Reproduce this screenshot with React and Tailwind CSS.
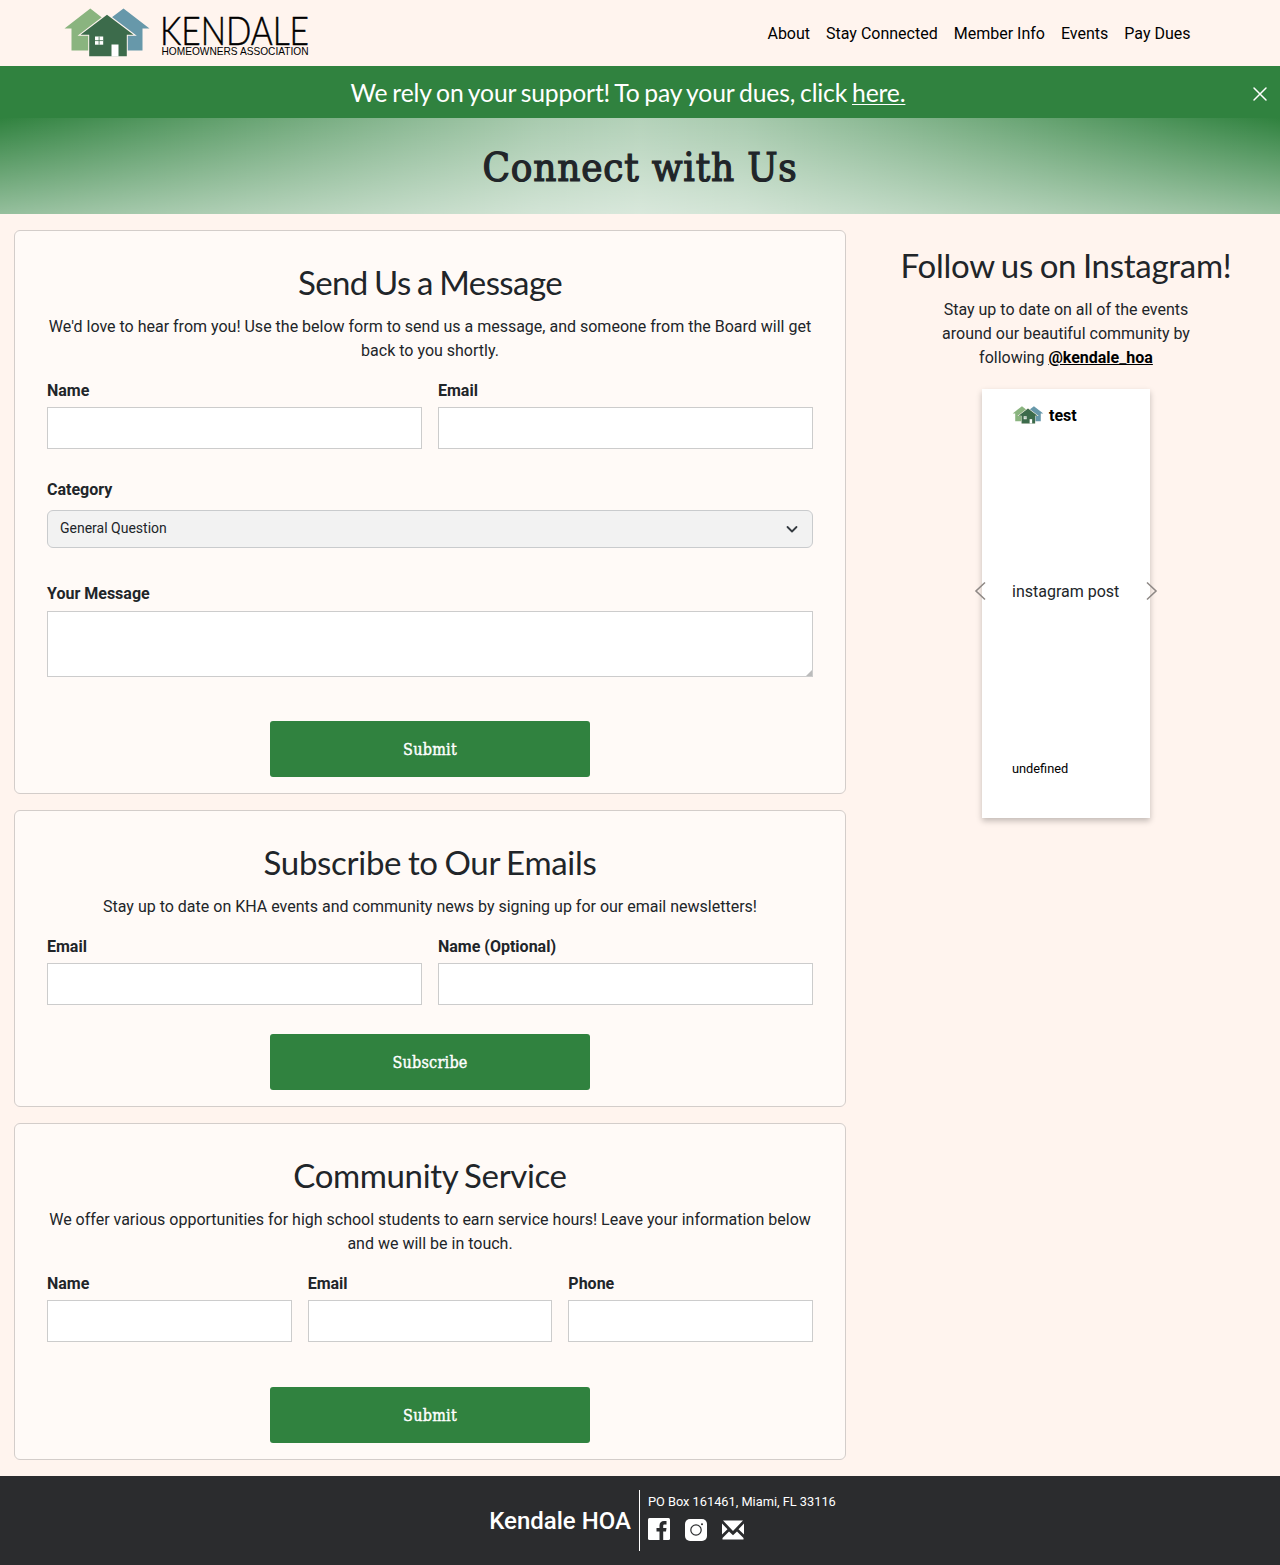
function Houses({ className }) {
  return (
    <svg viewBox="0 0 86 50" className={className} aria-hidden="true">
      <path d="M26.300 0.500L52 20.500H45V42.500H7.500V20.500H0.500Z" fill="#8ab47f" />
      <path d="M59.500 0.500L85.500 20.500H78.500V42.500H40V20.500H33Z" fill="#6798aa" />
      <path d="M43 5.200L72.800 27.800H63.800V49.500H24.200V27.800H13.500Z" fill="#fff5f0" />
      <path d="M43 6.700L69.500 26.800H62.800V48.300H25.200V26.800H16.500Z" fill="#3c6b4b" />
      <rect x="31" y="28.500" width="8.200" height="8.200" fill="#fff" />
      <path d="M35.100 28.500V36.700M31 32.600H39.200" stroke="#3c6b4b" strokeWidth="0.800" />
      <rect x="47.500" y="36.500" width="7" height="12" fill="#fff" />
    </svg>
  );
}

function Logo() {
  return (
    <a href="#" className="ml-16 flex h-[66px] items-start" aria-label="Kendale Homeowners Association">
      <Houses className="mt-[7.500px] h-[50px] w-[86px]" />
      <svg viewBox="0 0 156 60" className="mt-[5px] ml-[11px] h-[60px] w-[156px] overflow-visible">
        <text x="-1" y="39.500" textLength="149" lengthAdjust="spacingAndGlyphs" fontSize="39" fontWeight="300" stroke="#000" strokeWidth="0.500" fontFamily="Lato, sans-serif">KENDALE</text>
        <text x="0.500" y="49.500" textLength="147" lengthAdjust="spacingAndGlyphs" fontSize="10.500" fontFamily="Liberation Sans, sans-serif">HOMEOWNERS ASSOCIATION</text>
      </svg>
    </a>
  );
}

function Field({ label }) {
  return (
    <label className="flex min-w-0 flex-1 flex-col gap-1">
      <span className="font-bold">{label}</span>
      <input className="h-[42px] w-full border border-[#ccc] bg-white px-3" />
    </label>
  );
}

function Card({ title, titleClass, text, className, children }) {
  return (
    <section className={`rounded-md border border-[#d3cdca] bg-[#fffaf7] px-8 pt-8 ${className}`}>
      <h2 className={`mb-3.5 text-center font-["Lato",sans-serif] text-[33px] leading-[38.400px] [word-spacing:-1.500px] ${titleClass}`}>{title}</h2>
      <p className="mb-4 text-center">{text}</p>
      {children}
    </section>
  );
}

function Button({ children, className }) {
  return (
    <button className={`mx-auto block h-14 w-80 rounded-[3px] bg-[#30823f] pt-0.5 font-["DejaVu_Serif_Condensed","DejaVu_Serif",serif] text-[16px] tracking-[0.250px] text-white [-webkit-text-stroke:0.400px_white] ${className}`}>
      {children}
    </button>
  );
}

function Chevron({ flip }) {
  return (
    <svg viewBox="0 0 12 20" className={`h-5 w-3 ${flip ? "-scale-x-100" : ""}`} fill="none" stroke="#8f8986" strokeWidth="1.600">
      <path d="M11 1.500L2 10L11 18.500" />
    </svg>
  );
}

export default function App() {
  return (
    <div className={'flex min-h-[1565px] flex-col bg-[#fff4ee] font-["Roboto",sans-serif] text-base text-[#212529]'}>
      <header className="flex h-[66px] items-start justify-between">
        <Logo />
        <nav className="mr-[89.500px] flex h-[66px] items-center gap-4 pt-0.5 text-black">
          <a href="#">About</a>
          <a href="#">Stay Connected</a>
          <a href="#">Member Info</a>
          <a href="#">Events</a>
          <a href="#">Pay Dues</a>
        </nav>
      </header>

      <div className={'flex h-[52px] items-center bg-[#30823f] font-["Lato",sans-serif] text-[24.700px] text-white'}>
        <p className="flex-1 pt-px pl-1 text-center tracking-[-0.150px] [word-spacing:-1.300px]">
          We rely on your support! To pay your dues, click{" "}
          <a href="#" className="underline decoration-1 underline-offset-2">here.</a>
        </p>
        <button className="mt-1 mr-3 size-4" aria-label="Close">
          <svg viewBox="0 0 16 16" stroke="#fff" strokeWidth="1.500" strokeLinecap="round">
            <path d="M2 2L14 14M14 2L2 14" />
          </svg>
        </button>
      </div>

      <div className="flex h-24 items-center justify-center bg-[#30823f] bg-[image:linear-gradient(to_bottom,rgba(255,255,255,0),rgba(255,255,255,0.49)),linear-gradient(to_right,rgba(255,255,255,0),rgba(255,255,255,0.35)_25%,rgba(255,255,255,0.58)_42%,rgba(255,255,255,0.64)_50%,rgba(255,255,255,0.58)_58%,rgba(255,255,255,0.35)_75%,rgba(255,255,255,0))]">
        <h1 className={'pt-0.5 font-["DejaVu_Serif_Condensed","DejaVu_Serif",serif] text-[40px] leading-[48px] tracking-[0.800px] [-webkit-text-stroke:1.200px_#212529]'}>Connect with Us</h1>
      </div>

      <main className="flex flex-1 items-start pt-4 pl-3.5">
        <div className="flex w-[832px] flex-col gap-4">
          <Card
            title="Send Us a Message"
            titleClass="tracking-[-0.580px]"
            className="h-[564px]"
            text="We'd love to hear from you! Use the below form to send us a message, and someone from the Board will get back to you shortly."
          >
            <div className="flex gap-4">
              <Field label="Name" />
              <Field label="Email" />
            </div>
            <div className="mt-[29px] flex flex-col gap-2">
              <span className="font-bold">Category</span>
              <div className="flex h-[38px] items-center justify-between rounded-md border border-[#c9cbcd] bg-[#f2f2f2] px-3 pb-0.5 text-sm">
                General Question
                <svg viewBox="0 0 16 16" className="mt-0.5 size-4" fill="none" stroke="#343a40" strokeWidth="1.800" strokeLinecap="round" strokeLinejoin="round">
                  <path d="M3.500 6L8 10.500L12.500 6" />
                </svg>
              </div>
            </div>
            <div className="mt-[34px] flex flex-col gap-[5px]">
              <span className="font-bold">Your Message</span>
              <div className="relative">
                <textarea className="block h-[66px] w-full resize-none border border-[#ccc] bg-white" />
                <svg viewBox="0 0 6 6" className="absolute right-px bottom-px size-1.5">
                  <path d="M6 0V6H0Z" fill="#bbb" />
                </svg>
              </div>
            </div>
            <Button className="mt-11">Submit</Button>
          </Card>

          <Card
            title="Subscribe to Our Emails"
            titleClass="tracking-[-0.290px]"
            className="h-[297px]"
            text="Stay up to date on KHA events and community news by signing up for our email newsletters!"
          >
            <div className="flex gap-4">
              <Field label="Email" />
              <Field label="Name (Optional)" />
            </div>
            <Button className="mt-[29px]">Subscribe</Button>
          </Card>

          <Card
            title="Community Service"
            titleClass="tracking-[-0.360px]"
            className="h-[337px]"
            text="We offer various opportunities for high school students to earn service hours! Leave your information below and we will be in touch."
          >
            <div className="flex gap-4">
              <Field label="Name" />
              <Field label="Email" />
              <Field label="Phone" />
            </div>
            <Button className="mt-[45px]">Submit</Button>
          </Card>
        </div>

        <aside className="ml-1.5 flex flex-1 flex-col items-center pt-4">
          <h2 className={'mb-3.5 text-center font-["Lato",sans-serif] text-[33px] leading-[38.400px] tracking-[-0.270px] [word-spacing:-1.500px]'}>Follow us on Instagram!</h2>
          <p className="w-[260px] text-center">
            Stay up to date on all of the events around our beautiful community by following{" "}
            <a href="#" className="font-bold text-black underline">@kendale_hoa</a>
          </p>
          <div className="mt-[19px] flex items-center">
            <div className="z-10 -mr-1 pb-[25px]"><Chevron /></div>
            <article className="flex h-[429px] w-[168px] flex-col bg-white pt-[15px] pl-[30px] shadow-[0_3px_6px_rgba(0,0,0,0.24)]">
              <div className="flex items-center gap-[5px]">
                <Houses className="mb-0.5 h-[18px] w-8" />
                <span className="font-bold text-black">test</span>
              </div>
              <p className="mt-[152px]">instagram post</p>
              <p className="mt-[155px] text-[12.800px] leading-[19px] text-black">undefined</p>
            </article>
            <div className="z-10 -ml-1 pb-[25px]"><Chevron flip /></div>
          </div>
        </aside>
      </main>

      <footer className="flex h-[89px] justify-center bg-[#2b2c2e] pt-3.5 text-white">
        <div className="ml-[45px] flex h-[61px]">
          <div className="flex items-center border-r border-white pr-2 text-2xl font-medium">Kendale HOA</div>
          <div className="pt-0.5 pl-2">
            <p className="text-[12.800px] leading-[19px]">PO Box 161461, Miami, FL 33116</p>
            <div className="mt-1.5 flex items-center gap-[15px]">
              <svg viewBox="0 0 22 22" className="size-[22px]">
                <rect width="22" height="22" rx="1.500" fill="#fff" />
                <path d="M11.500 22V13.500H8.500V10H11.500V7.500C11.500 4.500 13.300 3 16 3H18.500V6.500H16.700C15.600 6.500 15.200 6.900 15.200 7.900V10H18.500L18 13.500H15.200V22Z" fill="#2b2c2e" />
              </svg>
              <svg viewBox="0 0 22 22" className="mt-0.5 size-[22px]">
                <rect width="22" height="22" rx="5" fill="#fff" />
                <circle cx="11" cy="11" r="5.200" fill="none" stroke="#2b2c2e" strokeWidth="1.200" />
                <circle cx="17" cy="5.200" r="1" fill="#2b2c2e" />
              </svg>
              <svg viewBox="0 0 22 20" className="mt-0.5 h-5 w-[22px]">
                <path d="M1 0.500H21L11 11ZM0 3.500L5.500 9.300L0 14.500ZM22 3.500L16.500 9.300L22 14.500ZM0.500 19.500V18L7 11.500L11 15.300L15 11.500L21.500 18V19.500Z" fill="#fff" />
              </svg>
            </div>
          </div>
        </div>
      </footer>
    </div>
  );
}
